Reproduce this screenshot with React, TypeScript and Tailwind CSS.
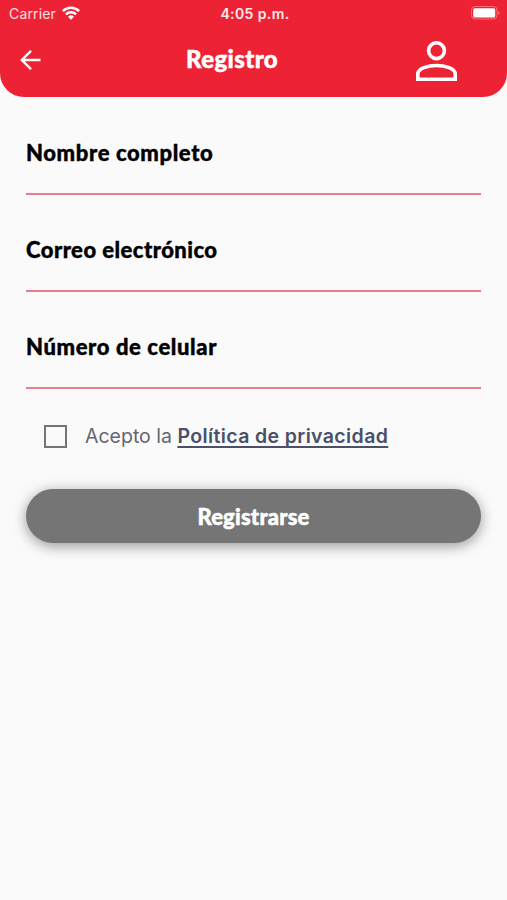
import React from 'react'

const WifiIcon = () => (
  <svg className="h-[14px] w-[18px]" viewBox="0 0 18 14" fill="none" stroke="white" strokeWidth="2.5">
    <path d="M0.9 5.1 A11.6 11.6 0 0 1 17.1 5.1" />
    <path d="M3.9 8.3 A7.3 7.3 0 0 1 14.1 8.3" />
    <path d="M9 13.8 L6 10.8 A4.3 4.3 0 0 1 12 10.8 Z" fill="white" stroke="none" />
  </svg>
)

const BatteryIcon = () => (
  <svg className="h-[14px] w-[30px]" viewBox="0 0 30 14" fill="none">
    <rect x="0.5" y="0.5" width="25.5" height="12.5" rx="3.5" stroke="white" strokeOpacity="0.35" />
    <rect x="2.2" y="2.2" width="22" height="9.2" rx="1.5" fill="white" />
    <path d="M27.5 4.8 Q29.6 6.8 27.5 8.8 Z" fill="white" fillOpacity="0.5" />
  </svg>
)

const ArrowIcon = () => (
  <svg className="h-5 w-[21px]" viewBox="0 0 21 20" fill="none" stroke="white" strokeWidth="2.4">
    <path d="M20.5 10 H2 M11 0.9 L1.8 10 L11 19.1" />
  </svg>
)

const UserIcon = () => (
  <svg className="h-10 w-[41px]" viewBox="0 0 41 40" fill="none" stroke="white" strokeWidth="3.6">
    <circle cx="20.5" cy="9.7" r="7.9" />
    <path d="M1.8 38.2 V33 C1.8 27.5 12 24.5 20.5 24.5 C29 24.5 39.2 27.5 39.2 33 V38.2 Z" />
  </svg>
)

const Field = ({ label, className }: { label: string; className: string }) => (
  <label className="block h-[97px] pt-11">
    <span className={`block h-[52px] whitespace-nowrap font-['Lato',sans-serif] text-[22px] font-black leading-6 text-black [-webkit-text-stroke:0.4px_black] ${className}`}>
      {label}
    </span>
    <span className="block h-[2px] bg-[#e57f8c]" />
  </label>
)

const App = () => {
  return (
    <div className="flex h-[900px] w-full flex-col bg-[#fafafa] font-['Inter',sans-serif]">
      {/* header */}
      <header className="h-[97px] rounded-b-[24px] bg-[#ed2235] text-white">
        <div className="grid h-[26px] grid-cols-3 items-center pl-[9px] pr-[6px]">
          <div className="flex items-center gap-[6px] text-[14px] tracking-[0.15px] text-white/85">
            <span>Carrier</span>
            <WifiIcon />
          </div>
          <span className="text-center text-[14px] font-semibold tracking-[0.4px] text-white/90">4:05 p.m.</span>
          <div className="flex justify-end">
            <BatteryIcon />
          </div>
        </div>
        <div className="flex h-[68px] items-center pl-5 pr-[50px]">
          <button aria-label="Volver">
            <ArrowIcon />
          </button>
          <h1 className="ml-[145px] w-[92px] whitespace-nowrap pb-[3px] font-['Lato',sans-serif] text-[24px] font-black tracking-[0.4px] [-webkit-text-stroke:0.5px_white]">
            Registro
          </h1>
          <button aria-label="Perfil" className="ml-auto pt-[2px]">
            <UserIcon />
          </button>
        </div>
      </header>

      {/* form */}
      <form className="px-[26px]">
        <Field label="Nombre completo" className="tracking-[0.62px]" />
        <Field label="Correo electrónico" className="tracking-[0.46px]" />
        <Field label="Número de celular" className="tracking-[0.62px]" />

        <div className="mt-[34px] flex h-7 items-center pl-[18px]">
          <span className="h-[23px] w-[23px] border-2 border-[#757575]" role="checkbox" aria-checked="false" />
          <p className="ml-[18px] whitespace-nowrap pt-px text-[19.5px] text-[#636674]">
            Acepto la{' '}
            <a className="font-semibold tracking-[0.38px] text-[#4b4f67] underline decoration-2 underline-offset-[3px] [text-decoration-skip-ink:none]">
              Política de privacidad
            </a>
          </p>
        </div>

        <button
          type="button"
          className="mt-[39px] flex h-[54px] w-full items-center justify-center rounded-full bg-[#757575] font-['Lato',sans-serif] text-[22px] font-black tracking-[0.2px] text-white shadow-[0_3px_14px_rgba(0,0,0,0.4)] [-webkit-text-stroke:0.5px_white]"
        >
          Registrarse
        </button>
      </form>
    </div>
  )
}

export default App
